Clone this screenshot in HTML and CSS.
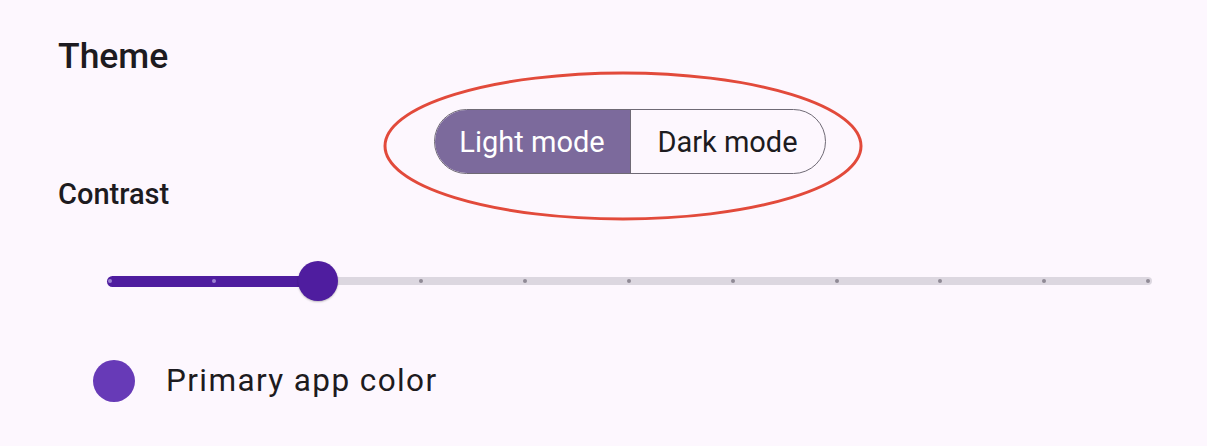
FILE: index.html
```html
<!DOCTYPE html>
<html lang="en">
<head>
<meta charset="utf-8">
<title>Theme</title>
<link rel="stylesheet" href="styles.css">
</head>
<body>
<main class="page">
  <h1 class="title">Theme</h1>
  <div class="theme-row">
    <div class="segmented">
      <button class="seg seg-selected">Light mode</button>
      <button class="seg">Dark mode</button>
    </div>
    <svg class="annotation" width="481" height="152" viewBox="0 0 481 152" aria-hidden="true">
      <ellipse cx="240" cy="76" rx="238" ry="73" fill="none" stroke="#e24a3b" stroke-width="3"/>
    </svg>
  </div>
  <h2 class="label">Contrast</h2>
  <div class="slider">
    <div class="track">
      <div class="track-active" style="width:211px"></div>
      <div class="track-inactive"></div>
    </div>
    <div class="ticks">
      <span class="tick on"></span><span class="tick on"></span><span class="tick on"></span>
      <span class="tick"></span><span class="tick"></span><span class="tick"></span>
      <span class="tick"></span><span class="tick"></span><span class="tick"></span>
      <span class="tick"></span><span class="tick"></span>
    </div>
    <div class="thumb" style="left:191px"></div>
  </div>
  <div class="primary-row">
    <span class="swatch"></span>
    <span class="primary-text">Primary app color</span>
  </div>
</main>
</body>
</html>
```

FILE: styles.css
```css
html, body {
  margin: 0;
  padding: 0;
  background: #fdf7fe;
}
body {
  font-family: Roboto, "Noto Sans", sans-serif;
  color: #1d1b20;
}
.page {
  padding: 35px 6px 0 58px;
}
.title {
  margin: 0;
  font-size: 35.5px;
  line-height: 42px;
  font-weight: 500;
}
.theme-row {
  position: relative;
  margin-top: 32px;
  display: flex;
  justify-content: center;
}
.segmented {
  display: flex;
  height: 65px;
  box-sizing: border-box;
  border: 1.5px solid #6f6a75;
  border-radius: 33px;
  overflow: hidden;
}
.seg {
  border: none;
  background: transparent;
  font-family: Roboto, sans-serif;
  font-size: 29px;
  color: #1d1b20;
  padding: 0;
  width: 195px;
  cursor: pointer;
}
.seg + .seg {
  border-left: 1.5px solid #6f6a75;
}
.seg-selected {
  background: #7c6a9c;
  color: #ffffff;
}
.annotation {
  position: absolute;
  left: 325px;
  top: -39px;
  pointer-events: none;
}
.label {
  margin: 4px 0 0;
  font-size: 29px;
  line-height: 32px;
  font-weight: 500;
}
.slider {
  position: relative;
  margin: 47px 49px 0;
  height: 48px;
  display: flex;
  align-items: center;
}
.track {
  display: flex;
  align-items: center;
  width: 100%;
}
.track-active {
  height: 11px;
  background: #4f1d9f;
  border-radius: 6px 0 0 6px;
}
.track-inactive {
  flex: 1;
  height: 8px;
  background: #dcd7e0;
  border-radius: 0 4px 4px 0;
}
.ticks {
  position: absolute;
  left: 1px;
  right: 2px;
  top: 22px;
  display: flex;
  justify-content: space-between;
}
.tick {
  width: 4px;
  height: 4px;
  border-radius: 50%;
  background: #8f8a95;
}
.tick.on {
  background: #9b80d2;
}
.thumb {
  position: absolute;
  top: 4px;
  width: 40px;
  height: 40px;
  border-radius: 50%;
  background: #4f1d9f;
  box-shadow: 0 1px 2px rgba(0, 0, 0, 0.25);
}
.primary-row {
  margin-top: 55px;
  padding-left: 35px;
  display: flex;
  align-items: center;
  gap: 31px;
}
.swatch {
  width: 42px;
  height: 42px;
  border-radius: 50%;
  background: #673ab7;
}
.primary-text {
  font-size: 31.5px;
  line-height: 42px;
  letter-spacing: 1.4px;
}
```
